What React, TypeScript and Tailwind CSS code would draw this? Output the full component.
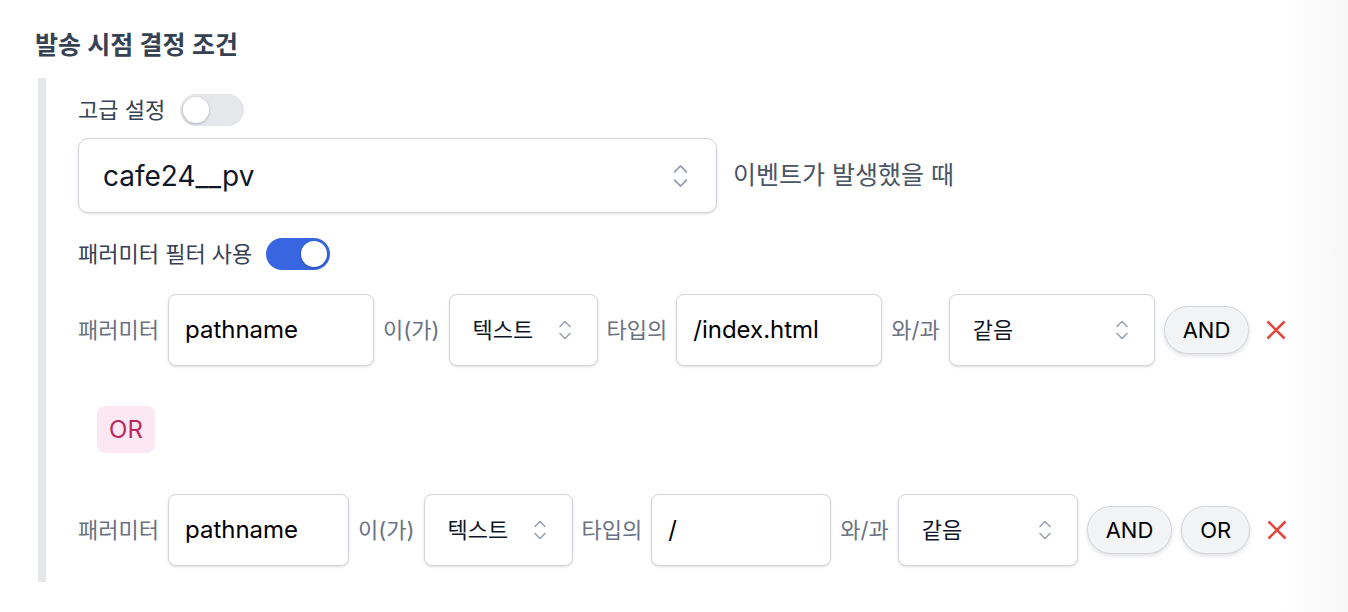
const font = "font-['Inter','Noto_Sans_CJK_KR',sans-serif]";

function Chevrons({ className = "" }: { className?: string }) {
  return (
    <svg
      viewBox="0 0 16 22"
      fill="none"
      stroke="currentColor"
      strokeWidth={1.6}
      strokeLinecap="round"
      strokeLinejoin="round"
      className={`text-gray-400 ${className}`}
    >
      <path d="M3 7.5 8 2.5 13 7.5" />
      <path d="M3 14.5 8 19.5 13 14.5" />
    </svg>
  );
}

function Cross() {
  return (
    <svg
      viewBox="0 0 20 20"
      fill="none"
      stroke="currentColor"
      strokeWidth={2.6}
      strokeLinecap="butt"
      className="ml-2 h-5 w-5 text-[#e2483d]"
    >
      <path d="M1.5 1.5 18.5 18.5 M18.5 1.5 1.5 18.5" />
    </svg>
  );
}

function Toggle({ on }: { on: boolean }) {
  return (
    <div
      className={`flex h-8 w-16 items-center rounded-full p-[3px] ${
        on ? "justify-end bg-[#3866e0]" : "justify-start bg-gray-200"
      }`}
    >
      <div className="h-[26px] w-[26px] rounded-full bg-white shadow-[0_1px_3px_rgba(0,0,0,0.25)]" />
    </div>
  );
}

function Label({ children }: { children: React.ReactNode }) {
  return <span className="whitespace-nowrap text-[22px] text-gray-500">{children}</span>;
}

function Input({ value, w }: { value: string; w: string }) {
  return (
    <div
      className={`flex h-[72px] items-center rounded-lg border border-gray-300 bg-white px-4 text-2xl text-black shadow-sm ${w}`}
    >
      {value}
    </div>
  );
}

function Select({ value, w }: { value: string; w: string }) {
  return (
    <div
      className={`flex h-[72px] items-center justify-between rounded-lg border border-gray-300 bg-white pl-[23px] pr-6 text-[22px] text-gray-900 shadow-sm ${w}`}
    >
      <span>{value}</span>
      <Chevrons className="h-[22px] w-4" />
    </div>
  );
}

function Pill({ children }: { children: React.ReactNode }) {
  return (
    <div className="flex h-12 items-center rounded-full border border-gray-300 bg-gray-100 px-[18px] text-[22px] text-black shadow-[0_2px_4px_rgba(0,0,0,0.12)]">
      {children}
    </div>
  );
}

type Row = {
  path: string;
  pathW: string;
  value: string;
  valueW: string;
  opW: string;
  or?: boolean;
};

const rows: Row[] = [
  { path: "pathname", pathW: "w-[206px]", value: "/index.html", valueW: "w-[206px]", opW: "w-[206px]" },
  { path: "pathname", pathW: "w-[181px]", value: "/", valueW: "w-[180px]", opW: "w-[180px]", or: true },
];

function FilterRow({ row }: { row: Row }) {
  return (
    <div className="flex items-center gap-[9px]">
      <Label>패러미터</Label>
      <Input value={row.path} w={row.pathW} />
      <Label>이(가)</Label>
      <Select value="텍스트" w="w-[149px]" />
      <Label>타입의</Label>
      <Input value={row.value} w={row.valueW} />
      <Label>와/과</Label>
      <Select value="같음" w={row.opW} />
      <Pill>AND</Pill>
      {row.or && <Pill>OR</Pill>}
      <Cross />
    </div>
  );
}

export default function App() {
  return (
    <div
      className={`min-h-[612px] w-full bg-[linear-gradient(to_right,#ffffff_95%,#f7f7f7)] pl-[35px] pt-[30px] ${font}`}
    >
      <h2 className="text-[25px] font-semibold leading-[30px] text-gray-700">발송 시점 결정 조건</h2>

      <div className="mt-[18px] ml-[3px] flex flex-col border-l-8 border-gray-200 pb-4 pl-8 pt-4">
        <div className="flex h-8 items-center gap-[15px]">
          <span className="text-[22px] leading-8 text-gray-700">고급 설정</span>
          <Toggle on={false} />
        </div>

        <div className="mt-3 flex items-center gap-4">
          <div className="flex h-[75px] w-[639px] items-center justify-between rounded-[10px] border border-gray-300 bg-white pl-6 pr-[26px] text-[28px] text-gray-900 shadow-sm">
            <span>cafe24__pv</span>
            <Chevrons className="h-[26px] w-[19px]" />
          </div>
          <span className="text-[25px] text-gray-600">이벤트가 발생했을 때</span>
        </div>

        <div className="mt-[25px] flex h-8 items-center gap-[14px]">
          <span className="text-[22px] leading-8 text-gray-700">패러미터 필터 사용</span>
          <Toggle on={true} />
        </div>

        <div className="mt-6">
          <FilterRow row={rows[0]} />
        </div>

        <div className="mt-10 ml-[19px] flex h-[47px] w-[58px] items-center justify-center rounded-lg bg-[#fce8f3] text-2xl text-[#b8285c]">
          OR
        </div>

        <div className="mt-[41px]">
          <FilterRow row={rows[1]} />
        </div>
      </div>
    </div>
  );
}
